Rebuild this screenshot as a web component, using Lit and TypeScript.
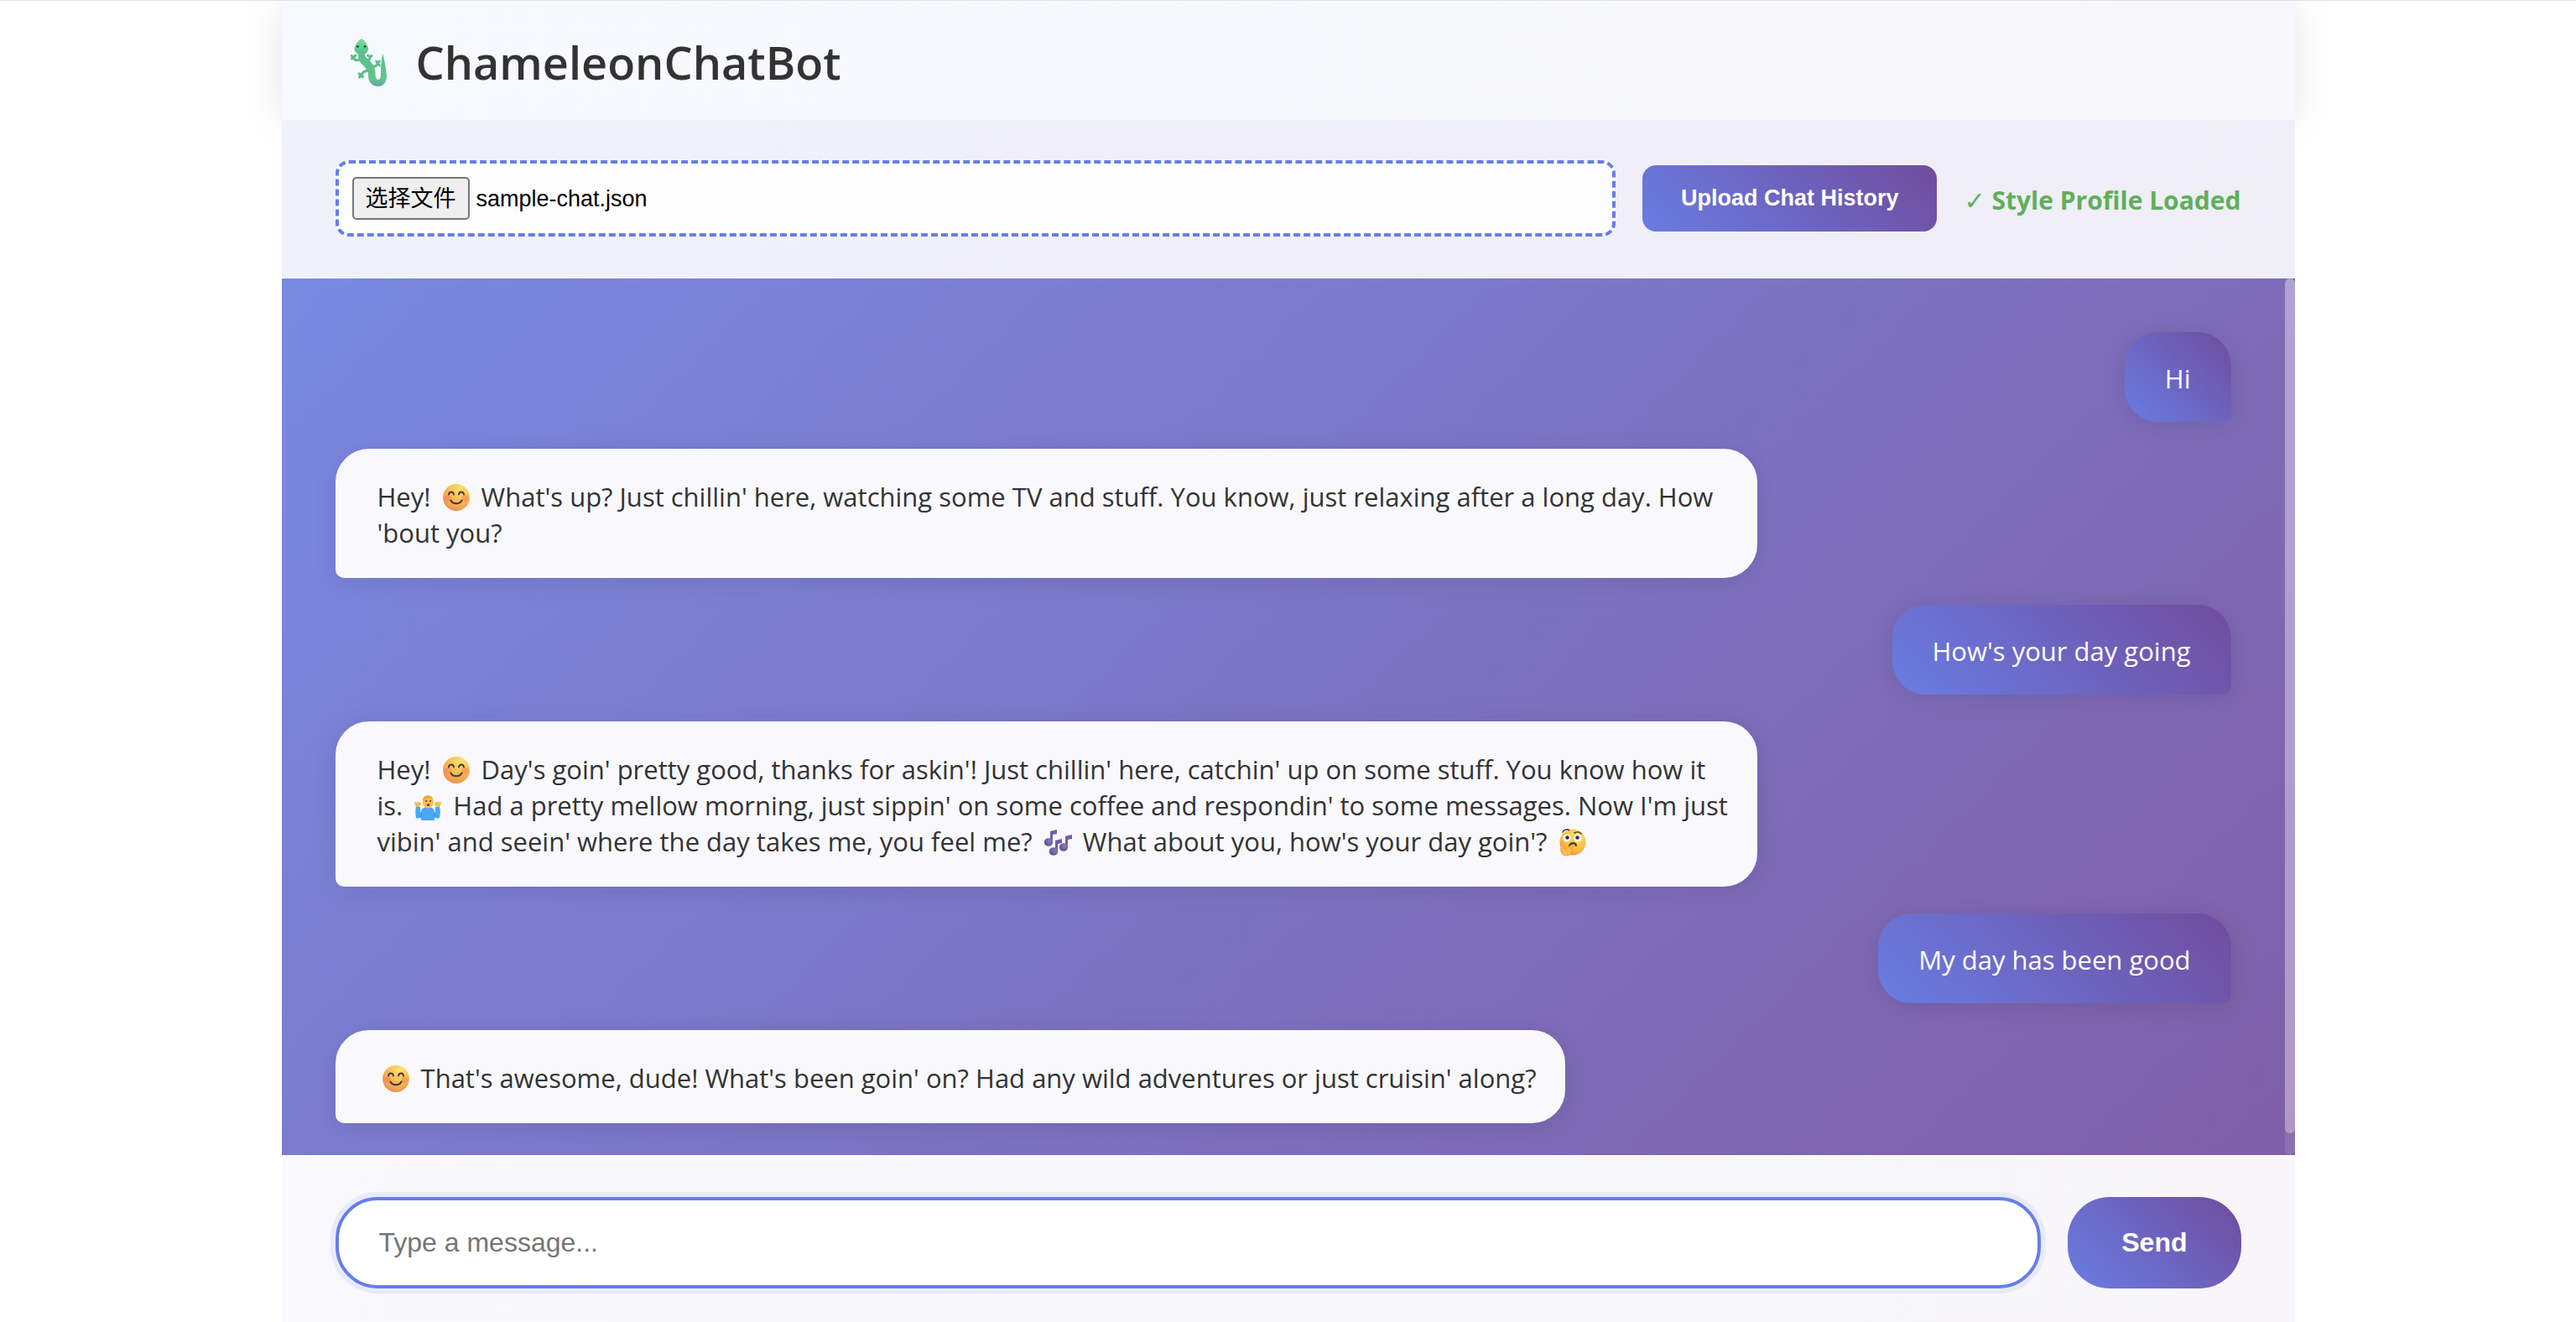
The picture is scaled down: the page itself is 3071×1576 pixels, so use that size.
import { LitElement, html, css, svg, type TemplateResult } from "lit";
import { customElement, property, state } from "lit/decorators.js";
import { styleMap } from "lit/directives/style-map.js";

type EmojiName = "smile" | "shrug" | "notes" | "thinking";
type Part = string | { emoji: EmojiName };
interface Message {
  from: "user" | "bot";
  lines: Part[][];
}

const EMOJI_LABELS: Record<EmojiName, string> = {
  smile: "😊",
  shrug: "🤷‍♂️",
  notes: "🎶",
  thinking: "🤔",
};

const note = (x: number, y: number) => svg`
  <path d="M${x + 3} ${y + 1}V${y - 13}L${x + 11} ${y - 15}V${y - 10}L${x + 6} ${y - 9}V${y}Z" fill="#6d5fa0"/>
  <ellipse cx=${x + 1} cy=${y} rx="5.2" ry="4.8" fill="url(#note)"/>`;

const EMOJI_ART: Record<EmojiName, TemplateResult> = {
  smile: svg`
    <defs>
      <radialGradient id="face" cx="0.65" cy="0.2" r="0.9">
        <stop offset="0" stop-color="#ffe36b"/>
        <stop offset="0.55" stop-color="#f6b650"/>
        <stop offset="0.85" stop-color="#ee9a50"/>
        <stop offset="1" stop-color="#d8678a"/>
      </radialGradient>
    </defs>
    <circle cx="22" cy="16" r="16" fill="url(#face)"/>
    <circle cx="11.5" cy="17" r="4" fill="#f2705a" opacity="0.4"/>
    <circle cx="32.5" cy="17" r="4" fill="#f2705a" opacity="0.4"/>
    <g fill="none" stroke="#4b3541" stroke-width="2" stroke-linecap="round">
      <path d="M13 12.5C13.5 8.5 18.5 8.5 19 12.5"/>
      <path d="M25 12.5C25.5 8.5 30.5 8.5 31 12.5"/>
      <path d="M15.5 19.5C18 24.5 26 24.5 28.5 19.5"/>
    </g>`,
  shrug: svg`
    <path d="M8 30C7 25 7 20 8 16L13 17C13 20 13 23 14 24C14 19 17 17 22 17S30 19 30 24C31 23 31 20 31 17L36 16C37 20 37 25 36 30C35 31 32 31 30 29V33H14V29C12 31 9 31 8 30Z" fill="#4aa8fa"/>
    <path d="M14 24V30M30 24V30" stroke="#2f8ae2" stroke-width="1" fill="none"/>
    <path d="M6 12C6.500 10 8 12 8.500 11.500C10 10 12 10.500 14 13C14 16 9 18 7.500 16Z" fill="#fcbe3c"/>
    <path d="M38 12C37.500 10 36 12 35.500 11.500C34 10 32 10.500 30 13C30 16 35 18 36.500 16Z" fill="#fcbe3c"/>
    <path d="M16 9C16 1.500 28.500 1.500 28.500 9V12C28.500 16 25 18.500 22.200 18.500S16 16 16 12Z" fill="#fcbd44"/>
    <path d="M16 9C16 2 27 1 28.500 8C25 5.500 19 6 17.500 10Z" fill="#f0ab3a"/>
    <circle cx="20" cy="10" r="1" fill="#463241"/>
    <circle cx="25" cy="10" r="1" fill="#463241"/>
    <ellipse cx="22.5" cy="14.500" rx="1.800" ry="1.500" fill="#a3263f"/>`,
  notes: svg`
    <defs>
      <radialGradient id="note" cx="0.65" cy="0.35" r="0.8">
        <stop offset="0" stop-color="#8a7cba"/>
        <stop offset="1" stop-color="#54498a"/>
      </radialGradient>
    </defs>
    ${note(10, 16)}${note(16, 27)}${note(28, 22)}`,
  thinking: svg`
    <defs>
      <radialGradient id="ponder" cx="0.65" cy="0.25" r="0.85">
        <stop offset="0" stop-color="#ffe05a"/>
        <stop offset="0.7" stop-color="#f9b741"/>
        <stop offset="1" stop-color="#ee7f58"/>
      </radialGradient>
    </defs>
    <circle cx="22" cy="16" r="15.5" fill="url(#ponder)"/>
    <circle cx="15" cy="11" r="4.6" fill="#fff"/>
    <circle cx="28" cy="11" r="4.6" fill="#fff"/>
    <circle cx="15.5" cy="10.5" r="2.3" fill="#3d2c37"/>
    <circle cx="27.5" cy="10.5" r="2.3" fill="#3d2c37"/>
    <g fill="none" stroke="#4b3541" stroke-width="1.6" stroke-linecap="round">
      <path d="M10 4C11.5 1 15 0 17.5 1.500"/>
      <path d="M24 5C26.5 3.5 30 3.5 32 6"/>
      <path d="M18 20.5C19.500 16 25 16 26 20" stroke-width="2.200"/>
    </g>
    <path d="M8 22C7 18 10 17 11 20L12 24L20 20C23 19 24 22 21 23L20 24C22 26 21 32 14 32C9 32 7 28 8 22Z" fill="#fbbb45" stroke="#e8963a" stroke-width="0.8"/>`,
};

@customElement("chat-emoji")
export class ChatEmoji extends LitElement {
  @property() name: EmojiName = "smile";

  static styles = css`
    :host {
      display: inline-block;
      vertical-align: -5px;
      line-height: 0;
    }
    .art {
      width: 44px;
      height: 32px;
      overflow: visible;
    }
  `;

  render() {
    return html`<svg class="art" viewBox="0 0 44 32" role="img" aria-label=${EMOJI_LABELS[this.name]}>
      ${EMOJI_ART[this.name]}
    </svg>`;
  }
}

@customElement("chat-bubble")
export class ChatBubble extends LitElement {
  @property({ attribute: false }) message!: Message;

  static styles = css`
    :host {
      display: flex;
    }
    .bubble {
      box-sizing: border-box;
      max-width: 75%;
      border-radius: 40px;
      line-height: 43px;
      overflow-wrap: anywhere;
      box-shadow: 0 4px 30px rgba(0, 0, 0, 0.1);
    }
    .line {
      display: block;
    }
    .user {
      margin-left: auto;
      padding: 34px 48px 30px;
      border-bottom-right-radius: 10px;
      color: #fff;
      background: linear-gradient(45deg, #697de3, #704c9d);
    }
    .bot {
      padding: 34px 32px 30px 48px;
      border: 2px solid #fafaff;
      border-bottom-left-radius: 10px;
      color: #333;
      background: #f8f8fd;
    }
    .wide {
      width: 100%;
    }
  `;

  render() {
    const { from, lines } = this.message;
    return html`<div class="bubble ${from} ${lines.length > 1 ? "wide" : ""}">
      ${lines.map(
        (line) =>
          html`<span class="line">${line.map((part) =>
            typeof part === "string" ? part : html`<chat-emoji name=${part.emoji}></chat-emoji>`
          )}</span>`
      )}
    </div>`;
  }
}

const MESSAGES: Message[] = [
  { from: "user", lines: [["Hi"]] },
  {
    from: "bot",
    lines: [
      [
        "Hey! ",
        { emoji: "smile" },
        " What's up? Just chillin' here, watching some TV and stuff. You know, just relaxing after a long day. How",
      ],
      ["'bout you?"],
    ],
  },
  { from: "user", lines: [["How's your day going"]] },
  {
    from: "bot",
    lines: [
      [
        "Hey! ",
        { emoji: "smile" },
        " Day's goin' pretty good, thanks for askin'! Just chillin' here, catchin' up on some stuff. You know how it",
      ],
      [
        "is. ",
        { emoji: "shrug" },
        " Had a pretty mellow morning, just sippin' on some coffee and respondin' to some messages. Now I'm just",
      ],
      [
        "vibin' and seein' where the day takes me, you feel me? ",
        { emoji: "notes" },
        " What about you, how's your day goin'? ",
        { emoji: "thinking" },
      ],
    ],
  },
  { from: "user", lines: [["My day has been good"]] },
  {
    from: "bot",
    lines: [
      [
        { emoji: "smile" },
        " That's awesome, dude! What's been goin' on? Had any wild adventures or just cruisin' along?",
      ],
    ],
  },
];

@customElement("app-root")
export class AppRoot extends LitElement {
  @state() private fileName = "sample-chat.json";
  @state() private messages = MESSAGES;
  @state() private thumb = { height: "97.5%", top: "0%" };

  static styles = css`
    :host {
      display: block;
      box-sizing: border-box;
      height: 100vh;
      overflow: hidden;
      border-top: 1px solid #dfe1e4;
      background: #fff;
      color: #333;
      font-family: "Open Sans", "Noto Sans", sans-serif;
      font-size: 31px;
    }
    * {
      box-sizing: border-box;
    }
    .container {
      display: flex;
      flex-direction: column;
      max-width: 2400px;
      height: 100%;
      margin: 0 auto;
    }
    .header {
      display: flex;
      align-items: center;
      gap: 16px;
      padding: 34px 64px 30px;
      background: linear-gradient(100deg, #f7f9fe, #f8f8fc);
      box-shadow: 0 4px 40px rgba(0, 0, 0, 0.1);
    }
    .lizard {
      width: 80px;
      height: 76px;
    }
    .title {
      margin: 0;
      font-size: 54px;
      font-weight: 600;
      line-height: 78px;
    }
    .upload {
      display: flex;
      align-items: center;
      gap: 32px;
      padding: 48px 64px;
      border-bottom: 2px solid rgba(255, 255, 255, 0.2);
      background: linear-gradient(100deg, #eff2fb, #f0f0fa 30%, #f0eef7);
      font-family: "Liberation Sans", "Noto Sans CJK SC", sans-serif;
      font-size: 27px;
    }
    .picker {
      position: relative;
      display: flex;
      flex: 1;
      align-items: baseline;
      gap: 8px;
      padding: 16px;
      border: 4px dashed #667eea;
      border-radius: 16px;
      background: #fdfdfe;
      color: #000;
    }
    .picker-input {
      position: absolute;
      inset: 0;
      width: 100%;
      height: 100%;
      margin: 0;
      opacity: 0;
      cursor: pointer;
    }
    .picker-button {
      padding: 2px 14px 0;
      border: 2px solid #767676;
      border-radius: 5px;
      background: #efefef;
      line-height: 45px;
    }
    .action {
      border: 0;
      color: #fff;
      background: linear-gradient(45deg, #697de3, #704c9d);
      font-family: "Liberation Sans", sans-serif;
      font-weight: 700;
      cursor: pointer;
    }
    .upload-button {
      padding: 24px 46px;
      border-radius: 16px;
      font-size: 27px;
      line-height: 31px;
    }
    .status {
      padding-top: 4px;
      color: #62ae5c;
      font-family: "Open Sans", "DejaVu Sans", sans-serif;
      font-size: 30px;
      font-weight: 700;
      line-height: 43px;
    }
    .chat {
      position: relative;
      display: flex;
      flex: 1;
      min-height: 0;
      background: linear-gradient(135deg, #7a89e2, #7f5fa7);
    }
    .messages {
      display: flex;
      flex: 1;
      flex-direction: column;
      gap: 32px;
      min-width: 0;
      padding: 64px 76px 64px 64px;
      overflow-y: auto;
      scrollbar-width: none;
    }
    .messages > * {
      flex: none;
    }
    .track {
      position: absolute;
      top: 0;
      right: 0;
      bottom: 0;
      width: 12px;
      border-radius: 6px;
      background: rgba(255, 255, 255, 0.1);
    }
    .thumb {
      position: absolute;
      width: 100%;
      border-radius: 6px;
      background: rgba(255, 255, 255, 0.3);
    }
    .composer {
      display: flex;
      gap: 32px;
      padding: 48px 64px 40px;
      border-top: 2px solid #fafafd;
      background: linear-gradient(90deg, #f8f8fd, #f8f6fb);
    }
    .message-input {
      flex: 1;
      min-width: 0;
      padding: 0 48px;
      border: 4px solid #667eea;
      border-radius: 50px;
      outline: none;
      background: #fff;
      box-shadow: 0 0 0 6px rgba(102, 126, 234, 0.1);
      color: #333;
      font-family: "Liberation Sans", sans-serif;
      font-size: 32px;
    }
    .message-input::placeholder {
      color: #757575;
    }
    .send {
      padding: 36px 64px;
      border-radius: 50px;
      font-size: 32px;
      line-height: 37px;
    }
  `;

  private onFile(event: Event) {
    const file = (event.target as HTMLInputElement).files?.[0];
    if (file) this.fileName = file.name;
  }

  private onScroll(event: Event) {
    const { clientHeight, scrollHeight, scrollTop } = event.target as HTMLElement;
    this.thumb = {
      height: `${(clientHeight / scrollHeight) * 100}%`,
      top: `${(scrollTop / scrollHeight) * 100}%`,
    };
  }

  private onSend(event: Event) {
    event.preventDefault();
    const input = this.renderRoot.querySelector<HTMLInputElement>(".message-input")!;
    const text = input.value.trim();
    if (!text) return;
    this.messages = [...this.messages, { from: "user", lines: [[text]] }];
    input.value = "";
  }

  render() {
    return html`
      <div class="container">
        <header class="header">
          <svg class="lizard" viewBox="0 0 80 76" role="img" aria-label="🦎">
            <defs>
              <linearGradient id="skin" x1="0" y1="10" x2="0" y2="67" gradientUnits="userSpaceOnUse">
                <stop offset="0" stop-color="#7ddc96"/>
                <stop offset="0.3" stop-color="#57c08a"/>
                <stop offset="0.85" stop-color="#62c58d"/>
                <stop offset="1" stop-color="#6a9cb4"/>
              </linearGradient>
            </defs>
            <g fill="none" stroke="#5ebd8a" stroke-width="3" stroke-linecap="round" stroke-linejoin="round">
              <path d="M31 35.500H23.500L21.500 32M19 30.500L21.500 32L24 30M19.500 34L22 33"/>
              <path d="M34 35.500H40L41.500 32M38.500 30L41.500 32L43 30.500"/>
              <path d="M42 43H48L50.500 39M48.500 37L50.500 39L52.500 37M50.500 40L52.500 42"/>
              <path d="M38 48L33 50L31 53M28 52L31 53L28.500 56M31 53L32.500 56"/>
            </g>
            <path d="M27 26L35 26C34 31 37 33 41 37C46 42 47.5 46 47.5 52C47.5 61 54 61 54 53C54 44 55 34 56 28C58 33 60 44 61 54C61 62 57 67 51 67C44 67 39 62 39 54C39 48 37 46 32 41C28 37 26 32 27 26Z" fill="url(#skin)"/>
            <path d="M31 10C34 11 39 18 39 22C39 26 36 29 31 29S22.5 26 22.5 22C22.5 18 28 11 31 10Z" fill="url(#skin)"/>
            <circle cx="26.5" cy="19.5" r="1.3" fill="#23303a"/>
            <circle cx="35" cy="19.5" r="1.3" fill="#23303a"/>
          </svg>
          <h1 class="title">ChameleonChatBot</h1>
        </header>
        <section class="upload">
          <label class="picker">
            <span class="picker-button">选择文件</span>
            <span>${this.fileName}</span>
            <input class="picker-input" type="file" accept=".json" @change=${this.onFile} />
          </label>
          <button class="action upload-button" type="button">Upload Chat History</button>
          <span class="status" role="status">✓ Style Profile Loaded</span>
        </section>
        <main class="chat">
          <div class="messages" @scroll=${this.onScroll}>
            ${this.messages.map((message) => html`<chat-bubble .message=${message}></chat-bubble>`)}
          </div>
          <div class="track" aria-hidden="true"><div class="thumb" style=${styleMap(this.thumb)}></div></div>
        </main>
        <form class="composer" @submit=${this.onSend}>
          <input class="message-input" type="text" placeholder="Type a message..." aria-label="Type a message..." />
          <button class="action send" type="submit">Send</button>
        </form>
      </div>
    `;
  }
}
